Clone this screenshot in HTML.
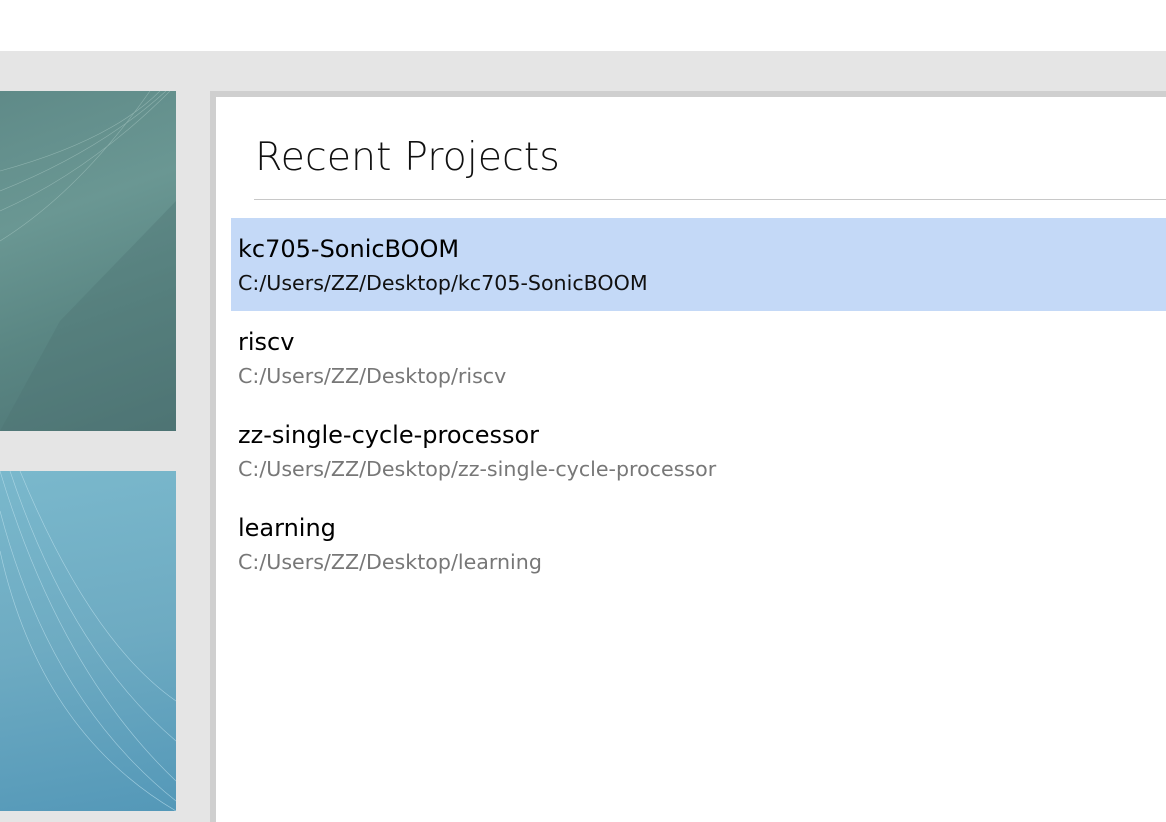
<!DOCTYPE html>
<html><head><meta charset="utf-8"><style>
body{margin:0;width:1166px;height:822px;overflow:hidden;background:#e5e5e5;position:relative;font-family:"DejaVu Sans","Liberation Sans",sans-serif}
.top{position:absolute;left:0;top:0;width:1166px;height:51px;background:#fff}
.img1{position:absolute;left:0;top:91px;width:176px;height:340px;background:linear-gradient(160deg,#5f8a88 0%,#6a9793 35%,#5a8683 65%,#4e7575 100%);overflow:hidden}
.img2{position:absolute;left:0;top:471px;width:176px;height:340px;background:linear-gradient(170deg,#7ab8cc 0%,#6eabc2 50%,#5498b8 100%);overflow:hidden}
.panel{position:absolute;left:210px;top:91px;width:956px;height:731px;background:#cfcfcf}
.inner{position:absolute;left:216px;top:97px;width:950px;height:725px;background:#fff}
h1{position:absolute;left:255px;top:134px;margin:0;font-weight:200;font-size:39.5px;color:#111;white-space:nowrap}
.line{position:absolute;left:254px;top:199px;width:912px;height:1px;background:#c8c8c8}
.hl{position:absolute;left:231px;top:218px;width:935px;height:93px;background:#c4d9f7}
.n{position:absolute;left:238px;font-size:24px;color:#000;white-space:nowrap}
.p{position:absolute;left:238px;font-size:20.6px;color:#777;white-space:nowrap}
</style></head><body>
<div class="top"></div>
<div class="img1"><svg width="176" height="340"><polygon points="60,230 176,110 176,340 0,340" fill="#4e7472" opacity=".35"/><g stroke="#a9c8c3" stroke-width=".6" fill="none" opacity=".6"><path d="M0,100 Q100,60 166,0"/><path d="M0,80 Q110,50 160,0"/><path d="M0,120 Q90,80 170,0"/><path d="M0,150 Q80,100 150,0"/></g></svg></div>
<div class="img2"><svg width="176" height="340"><g stroke="#bfe2ee" stroke-width=".6" fill="none" opacity=".7"><path d="M0,0 Q60,200 176,310"/><path d="M10,0 Q70,180 176,270"/><path d="M0,40 Q50,230 176,330"/><path d="M20,0 Q90,170 176,230"/><path d="M0,80 Q40,260 176,340"/></g></svg></div>
<div class="panel"></div>
<div class="inner"></div>
<h1>Recent Projects</h1>
<div class="line"></div>
<div class="hl"></div>
<div class="n" style="top:235px">kc705-SonicBOOM</div>
<div class="p" style="top:271px;color:#111">C:/Users/ZZ/Desktop/kc705-SonicBOOM</div>
<div class="n" style="top:328px">riscv</div>
<div class="p" style="top:364px">C:/Users/ZZ/Desktop/riscv</div>
<div class="n" style="top:421px">zz-single-cycle-processor</div>
<div class="p" style="top:457px">C:/Users/ZZ/Desktop/zz-single-cycle-processor</div>
<div class="n" style="top:514px">learning</div>
<div class="p" style="top:550px">C:/Users/ZZ/Desktop/learning</div>
</body></html>
